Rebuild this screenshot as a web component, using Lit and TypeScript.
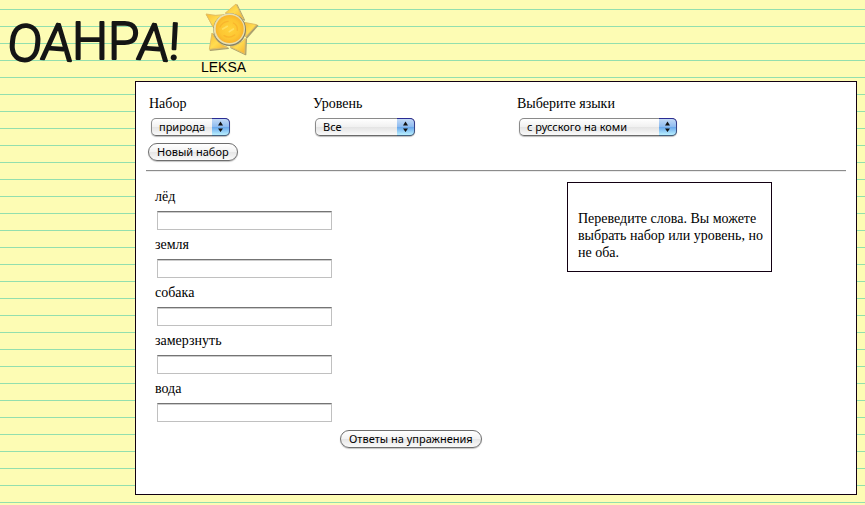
import { LitElement, html, css, svg } from "lit";
import { customElement, property } from "lit/decorators.js";

const words = ["лёд", "земля", "собака", "замерзнуть", "вода"];

@customElement("sun-logo")
class SunLogo extends LitElement {
  static styles = css`
    :host { display: block; }
    svg { display: block; width: 55px; height: 54px; }
    .edge { fill: #a9a06e; stroke: #a9a06e; stroke-width: 4; stroke-linejoin: round; }
    .ray { stroke: #e3bf62; stroke-width: 3; stroke-linejoin: round; }
  `;
  render() {
    const rays = [
      "M138 9 L106 36 Q140 38 160 54 Z",
      "M200 71 L162 64 Q170 85 167 108 Z",
      "M164 158 L166 112 Q148 133 120 137 Z",
      "M58 145 L66 96 Q80 128 112 139 Z",
      "M48 39 Q78 46 102 41 Q80 54 69 78 Z",
    ];
    return html`<svg viewBox="42 3 165 162" aria-hidden="true">
      <defs>
        <radialGradient id="disc">
          <stop offset="0" stop-color="#ffd23a" />
          <stop offset="0.7" stop-color="#fdc632" />
          <stop offset="1" stop-color="#f9b42c" />
        </radialGradient>
        <linearGradient id="flame" x1="0" y1="0" x2="1" y2="1">
          <stop offset="0" stop-color="#fbbd35" />
          <stop offset="0.5" stop-color="#ffdc50" />
          <stop offset="1" stop-color="#f8b02c" />
        </linearGradient>
      </defs>
      ${rays.map((d) => svg`<path class="edge" d=${d} transform="translate(3 3)" /><path class="ray" fill="url(#flame)" d=${d} />`)}
      <circle cx="119" cy="86" r="49" fill="#858064" />
      <circle cx="118" cy="84" r="47" fill="#e9dfae" />
      <circle cx="119" cy="84" r="42" fill="url(#disc)" />
      <path d="M90 78q8-16 24-17M102 104q16 10 32-2M130 66q14 8 12 22" fill="none" stroke="#f7a928" stroke-width="4" stroke-linecap="round" opacity="0.6" />
      <path d="M98 84l14-8M118 92l12-8" fill="none" stroke="#ffe36a" stroke-width="5" stroke-linecap="round" opacity="0.8" />
    </svg>`;
  }
}

@customElement("choice-field")
class ChoiceField extends LitElement {
  static styles = css`
    :host { display: block; }
    label { display: block; line-height: 17px; }
    .box { position: relative; display: block; margin: 6px 2px 0; max-width: 100%; }
    .small { width: 79px; }
    .medium { width: 100px; }
    .large { width: 158px; }
    select {
      appearance: none;
      display: block;
      box-sizing: border-box;
      width: 100%;
      height: 18px;
      margin: 0;
      padding: 0 20px 0 7px;
      border: 1px solid #8a8a8a;
      border-bottom-color: #6a6a6a;
      border-radius: 5px;
      background: linear-gradient(#ffffff, #f1f1f1 48%, #e4e4e4 52%, #fafafa);
      box-shadow: 0 1px 1px #bbbbbb;
      color: #000000;
      font: 11px/16px "Noto Sans", sans-serif;
    }
    svg { position: absolute; top: 0; right: 0; width: 18px; height: 18px; pointer-events: none; }
  `;
  @property() label = "";
  @property() value = "";
  @property() size = "small";
  render() {
    return html`
      <label for="choice">${this.label}</label>
      <span class="box ${this.size}">
        <select id="choice"><option>${this.value}</option></select>
        <svg viewBox="0 0 18 18" aria-hidden="true">
          <defs>
            <linearGradient id="blue" x1="0" y1="0" x2="0" y2="1">
              <stop offset="0" stop-color="#c3daf6" />
              <stop offset="0.48" stop-color="#8fbcf0" />
              <stop offset="0.52" stop-color="#6aa8ec" />
              <stop offset="1" stop-color="#b9f0ff" />
            </linearGradient>
            <linearGradient id="rim" x1="0" y1="0" x2="0" y2="1">
              <stop offset="0" stop-color="#2a2a94" />
              <stop offset="1" stop-color="#44607e" />
            </linearGradient>
          </defs>
          <path d="M0 0H13a5 5 0 0 1 5 5V13a5 5 0 0 1-5 5H0Z" fill="url(#rim)" />
          <path d="M0 1H13a4 4 0 0 1 4 4V13a4 4 0 0 1-4 4H0Z" fill="url(#blue)" />
          <path d="M8.500 3.500L11 7.500H6ZM8.500 14L6 10.500H11Z" fill="#111111" />
        </svg>
      </span>
    `;
  }
}

@customElement("app-root")
class AppRoot extends LitElement {
  static styles = css`
    :host {
      display: block;
      box-sizing: border-box;
      min-height: 100vh;
      padding-bottom: 10px;
      background: repeating-linear-gradient(#fdfcb4 0 9px, #93dfae 9px 10px, #fdfcb4 10px 17px);
      color: #000000;
      font: 14px/17px "Liberation Serif", serif;
    }
    header { display: flex; height: 81px; padding-left: 8px; }
    h1 { width: 193px; margin: 0; }
    .wordmark { display: block; width: 190px; height: 76px; overflow: visible; }
    .wordmark text {
      fill: #151515;
      stroke: #151515;
      stroke-width: 2px;
      stroke-linejoin: round;
      font: 300 51px "Roboto", sans-serif;
    }
    .brand {
      display: flex;
      flex-direction: column;
      padding-top: 2px;
      color: #000000;
      font: 14px/22px "Liberation Sans", sans-serif;
      text-decoration: none;
    }
    sun-logo { margin-left: 3px; }
    main {
      box-sizing: border-box;
      min-height: 414px;
      margin: 0 8px 0 135px;
      padding: 13px 10px 46px;
      border: 1px solid #120012;
      background: #ffffff;
    }
    .choices { display: grid; grid-template-columns: 164px 204px 1fr; padding: 0 3px; }
    button {
      display: block;
      box-sizing: border-box;
      height: 18px;
      margin: 0;
      padding: 0 8px;
      border: 1px solid #6e6e6e;
      border-radius: 9px;
      background: linear-gradient(#ffffff, #f3f3f3 48%, #e6e6e6 52%, #fafafa);
      box-shadow: 0 1px 1px #c4c4c4;
      color: #000000;
      font: 11px/16px "Noto Sans", sans-serif;
      white-space: nowrap;
    }
    .renew { margin: 7px 2px 9px; }
    hr { margin: 0; border: 0; border-top: 1px solid #8c8c8c; border-bottom: 1px solid #ececec; }
    .exercise { display: grid; grid-template-columns: 421px minmax(0, 205px); align-items: start; padding-top: 10px; }
    .words { padding: 6px 9px 0; }
    .word { display: grid; gap: 6px; margin-bottom: 6px; }
    .word input {
      box-sizing: border-box;
      width: 175px;
      height: 19px;
      margin: 0 2px;
      padding: 0 3px;
      border: 1px solid #c0c0c0;
      border-top: 1px solid #747474;
      border-radius: 0;
      background: #ffffff;
      box-shadow: inset 0 1px 0 #cccccc;
      font: 13px/16px "Liberation Sans", sans-serif;
    }
    .answers { margin: 8px 0 0 185px; }
    .hint { margin: 0; padding: 27px 4px 10px 10px; border: 1px solid #120012; }
  `;
  render() {
    return html`
      <header>
        <h1>
          <svg class="wordmark" viewBox="0 0 190 76"><text x="-2" y="59" rotate="6 4 0 0 4 3">OAHPA!</text></svg>
        </h1>
        <a class="brand" href="#leksa"><sun-logo></sun-logo>LEKSA</a>
      </header>
      <main>
        <div class="choices">
          <choice-field label="Набор" value="природа" size="small"></choice-field>
          <choice-field label="Уровень" value="Все" size="medium"></choice-field>
          <choice-field label="Выберите языки" value="с русского на коми" size="large"></choice-field>
        </div>
        <button class="renew" type="button">Новый набор</button>
        <hr />
        <div class="exercise">
          <form class="words">
            ${words.map((word, i) => html`<div class="word">
              <label for="word-${i}">${word}</label>
              <input id="word-${i}" type="text" />
            </div>`)}
            <button class="answers" type="button">Ответы на упражнения</button>
          </form>
          <p class="hint">Переведите слова. Вы можете выбрать набор или уровень, но не оба.</p>
        </div>
      </main>
    `;
  }
}
